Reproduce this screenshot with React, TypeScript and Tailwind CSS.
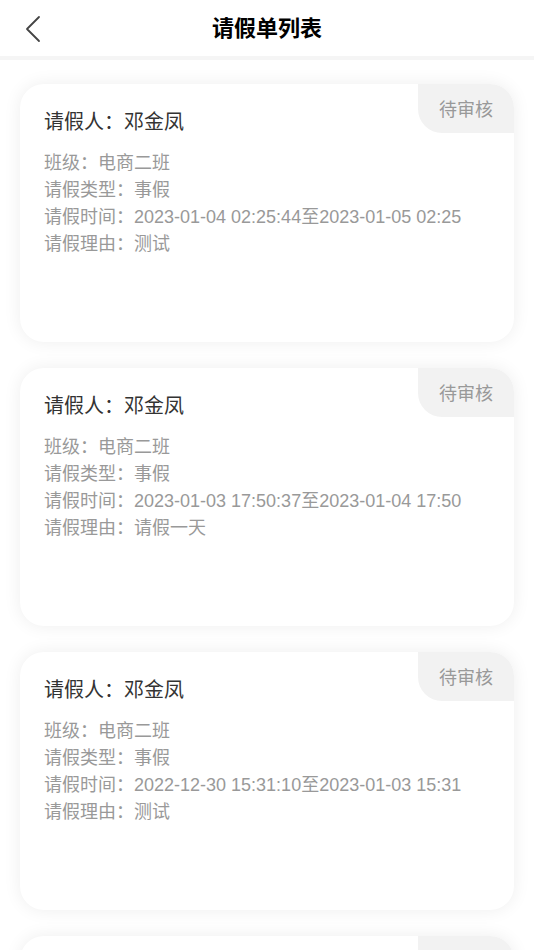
const LEAVES = [
  { id: 1, name: "邓金凤", cls: "电商二班", type: "事假", time: "2023-01-04 02:25:44至2023-01-05 02:25", reason: "测试" },
  { id: 2, name: "邓金凤", cls: "电商二班", type: "事假", time: "2023-01-03 17:50:37至2023-01-04 17:50", reason: "请假一天" },
  { id: 3, name: "邓金凤", cls: "电商二班", type: "事假", time: "2022-12-30 15:31:10至2023-01-03 15:31", reason: "测试" },
  { id: 4, name: "邓金凤", cls: "电商二班", type: "事假", time: "2022-12-29 10:12:05至2022-12-30 10:12", reason: "测试" },
];

const font = { fontFamily: '"Liberation Sans", "Noto Sans CJK SC", sans-serif' };

export default function App() {
  return (
    <div className="h-[950px] overflow-hidden bg-white" style={font}>
      {/* header */}
      <div className="relative h-14 flex items-center justify-center bg-white">
        <svg className="absolute left-[24px] top-[15px]" width="18" height="28" viewBox="0 0 18 28" fill="none">
          <polyline points="15,2 3,14 15,26" stroke="#444" strokeWidth="1.8" strokeLinecap="round" strokeLinejoin="round" />
        </svg>
        <h1 className="text-[22px] font-bold text-black">请假单列表</h1>
      </div>
      <div className="h-1 bg-[#f5f5f5]" />

      <div className="flex flex-col gap-[26px] px-5 pt-6">
        {LEAVES.map((l) => (
          <div
            key={l.id}
            className="relative h-[258px] shrink-0 overflow-hidden rounded-[24px] bg-white shadow-[0_0_18px_rgba(0,0,0,0.07)]"
          >
            <div className="absolute right-0 top-0 flex h-[49px] w-[96px] items-center justify-center rounded-bl-[24px] bg-[#f2f2f2] pt-[4px] text-[18px] text-[#999]">
              待审核
            </div>
            <div className="px-6 pt-6">
              <div className="text-[20px] leading-[28px] text-[#333]">请假人：{l.name}</div>
              <div className="mt-[14px] text-[18px] leading-[27px] text-[#999]">
                <div>班级：{l.cls}</div>
                <div>请假类型：{l.type}</div>
                <div>请假时间：{l.time}</div>
                <div>请假理由：{l.reason}</div>
              </div>
            </div>
          </div>
        ))}
      </div>
    </div>
  );
}
